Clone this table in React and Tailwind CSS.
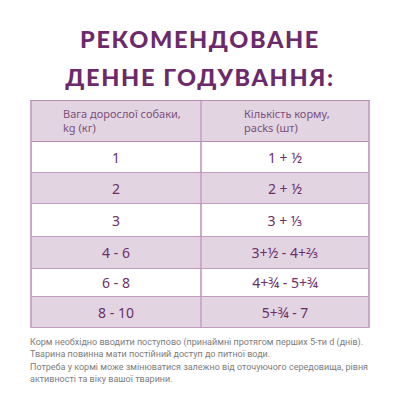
export default function App() {
  const rows = [
    ["1", "1 + ½", "bg-white", "h-[31px]"],
    ["2", "2 + ½", "bg-[#e3d4e2]", "h-[31px]"],
    ["3", "3 + ⅓", "bg-white", "h-[33px]"],
    ["4 - 6", "3+½ - 4+⅔", "bg-[#e3d4e2]", "h-[32px]"],
    ["6 - 8", "4+¾ - 5+¾", "bg-white", "h-[28px]"],
    ["8 - 10", "5+¾ - 7", "bg-[#e3d4e2]", "h-[31px]"],
  ];
  return (
    <div className="w-[400px] h-[400px] bg-white overflow-hidden" style={{ fontFamily: '"Noto Sans", sans-serif' }}>
      <div className="pt-[20px] h-[100px] text-center text-[#6c2a6a] font-black text-[23.5px] leading-[38px] tracking-[0.07em]" style={{ fontFamily: 'Lato, sans-serif' }}>
        <div>РЕКОМЕНДОВАНЕ</div>
        <div>ДЕННЕ ГОДУВАННЯ:</div>
      </div>
      <div className="mx-[30px] w-[340px] border-t border-l-2 border-r-2 border-[#c9a8c7] border-t-[#b58fb2]">
        <div className="flex h-[41px] bg-[#e3d4e2] border-b border-[#b58fb2] text-[#7c4f7a] text-[11px] leading-[14px]">
          <div className="w-[170px] border-r-2 border-[#cfa9cc] pl-[31px] pt-[6px]">
            Вага дорослої собаки,<br />kg (кг)
          </div>
          <div className="flex-1 pl-[42px] pt-[6px]">
            Кількість корму,<br />packs (шт)
          </div>
        </div>
        {rows.map(([a, b, bg, h], i) => (
          <div key={i} className={`flex ${h} ${bg} border-b border-[#c39bc0] text-[#6c2f6a] text-[14px]`}>
            <div className="w-[170px] border-r-2 border-[#cfa9cc] flex items-center justify-center">{a}</div>
            <div className="flex-1 flex items-center justify-center">{b}</div>
          </div>
        ))}
      </div>
      <div className="mx-[30px] mt-[8px] text-[9px] leading-[12.3px] text-[#7d7d7d] whitespace-nowrap" style={{ fontFamily: 'Roboto, sans-serif' }}>
        <div>Корм необхідно вводити поступово (принаймні протягом перших 5-ти d (днів).</div>
        <div>Тварина повинна мати постійний доступ до питної води.</div>
        <div>Потреба у кормі може змінюватися залежно від оточуючого середовища, рівня</div>
        <div>активності та віку вашої тварини.</div>
      </div>
    </div>
  );
}
